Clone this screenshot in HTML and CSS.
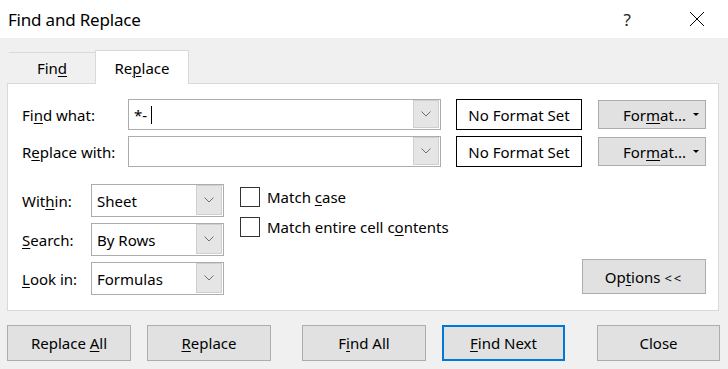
FILE: index.html
```html
<!DOCTYPE html>
<html lang="en">
<head>
    <meta charset="UTF-8">
    <title>Find and Replace</title>
    <link rel="stylesheet" href="styles.css">
</head>
<body>
    <div class="titlebar">
        <span class="title">Find and Replace</span>
        <span class="help">?</span>
        <span class="close-x">
            <svg width="16" height="16" viewBox="0 0 16 16"><path d="M1 1 L15 15 M15 1 L1 15" stroke="#000" stroke-width="1" fill="none"/></svg>
        </span>
    </div>

    <div class="dialog">
        <div class="tabs">
            <div class="tab">Fin<u>d</u></div>
            <div class="tab active">Re<u>p</u>lace</div>
        </div>

        <div class="panel">
            <div class="field-row">
                <label class="field-label">Fi<u>n</u>d what:</label>
                <div class="combo wide">
                    <span class="combo-text">*-<span class="caret"></span></span>
                    <span class="drop"><svg width="10" height="6" viewBox="0 0 10 6"><path d="M0.5 0.5 L5 5 L9.5 0.5" stroke="#707070" fill="none"/></svg></span>
                </div>
                <div class="format-preview">No Format Set</div>
                <button class="btn format-btn"><span>For<u>m</u>at...</span><span class="tri"></span></button>
            </div>
            <div class="field-row second">
                <label class="field-label">R<u>e</u>place with:</label>
                <div class="combo wide">
                    <span class="combo-text"></span>
                    <span class="drop"><svg width="10" height="6" viewBox="0 0 10 6"><path d="M0.5 0.5 L5 5 L9.5 0.5" stroke="#707070" fill="none"/></svg></span>
                </div>
                <div class="format-preview">No Format Set</div>
                <button class="btn format-btn"><span>For<u>m</u>at...</span><span class="tri"></span></button>
            </div>

            <div class="lower">
                <div class="selects">
                    <div class="select-row">
                        <label class="select-label">Wit<u>h</u>in:</label>
                        <div class="combo small">
                            <span class="combo-text">Sheet</span>
                            <span class="drop"><svg width="10" height="6" viewBox="0 0 10 6"><path d="M0.5 0.5 L5 5 L9.5 0.5" stroke="#707070" fill="none"/></svg></span>
                        </div>
                    </div>
                    <div class="select-row">
                        <label class="select-label"><u>S</u>earch:</label>
                        <div class="combo small">
                            <span class="combo-text">By Rows</span>
                            <span class="drop"><svg width="10" height="6" viewBox="0 0 10 6"><path d="M0.5 0.5 L5 5 L9.5 0.5" stroke="#707070" fill="none"/></svg></span>
                        </div>
                    </div>
                    <div class="select-row">
                        <label class="select-label"><u>L</u>ook in:</label>
                        <div class="combo small">
                            <span class="combo-text">Formulas</span>
                            <span class="drop"><svg width="10" height="6" viewBox="0 0 10 6"><path d="M0.5 0.5 L5 5 L9.5 0.5" stroke="#707070" fill="none"/></svg></span>
                        </div>
                    </div>
                </div>

                <div class="checks">
                    <label class="check-row"><span class="box"></span><span>Match <u>c</u>ase</span></label>
                    <label class="check-row"><span class="box"></span><span>Match entire cell c<u>o</u>ntents</span></label>
                </div>

                <button class="btn options-btn">Op<u>t</u>ions <span class="chev">&lt;&lt;</span></button>
            </div>
        </div>

        <div class="actions">
            <button class="btn action">Replace <u>A</u>ll</button>
            <button class="btn action gap-s"><u>R</u>eplace</button>
            <button class="btn action gap-l">F<u>i</u>nd All</button>
            <button class="btn action narrow gap-s default"><u>F</u>ind Next</button>
            <button class="btn action narrow gap-l">Close</button>
        </div>
    </div>
</body>
</html>
```

FILE: styles.css
```css
* {
    box-sizing: border-box;
}

body {
    margin: 0;
    width: 728px;
    height: 369px;
    overflow: hidden;
    background: #f0f0f0;
    font-family: 'Noto Sans', sans-serif;
    font-size: 15px;
    color: #000;
}

u {
    text-decoration-thickness: 1px;
    text-underline-offset: 2px;
}

.titlebar {
    height: 38px;
    background: #fff;
    display: flex;
    align-items: center;
    padding-left: 8px;
}

.title {
    flex: 1;
    font-size: 17px;
    letter-spacing: -0.2px;
}

.help {
    font-size: 17px;
    margin-right: 58px;
    color: #222;
}

.close-x {
    display: flex;
    margin-right: 23px;
}

.dialog {
    padding: 12px 0 0 7px;
}

.tabs {
    display: flex;
    align-items: flex-end;
    height: 33px;
    padding-left: 2px;
}

.tab {
    width: 86px;
    height: 31px;
    border-top: 1px solid #d9d9d9;
    display: flex;
    align-items: center;
    justify-content: center;
}

.tab.active {
    width: 94px;
    height: 34px;
    margin-bottom: -1px;
    background: #fff;
    border: 1px solid #d9d9d9;
    border-bottom: none;
    position: relative;
    z-index: 1;
}

.panel {
    width: 712px;
    height: 228px;
    background: #fff;
    border: 1px solid #d9d9d9;
    padding: 15px 12px 0 14px;
}

.field-row {
    display: flex;
    align-items: center;
    height: 31px;
}

.field-row.second {
    margin-top: 6px;
}

.field-label {
    width: 106px;
}

.combo {
    display: flex;
    align-items: stretch;
    border: 1px solid #acacac;
    background: #fff;
}

.combo.wide {
    width: 313px;
    height: 31px;
}

.combo-text {
    flex: 1;
    display: flex;
    align-items: center;
    padding-left: 5px;
}

.caret {
    display: inline-block;
    width: 1px;
    height: 18px;
    background: #000;
    margin-left: 4px;
}

.drop {
    width: 26px;
    margin: 0 1px 1px 0;
    background: #e5e5e5;
    border: 1px solid #cfcfcf;
    display: flex;
    align-items: center;
    justify-content: center;
}

.format-preview {
    width: 126px;
    height: 31px;
    margin-left: 15px;
    border: 1px solid #000;
    display: flex;
    align-items: center;
    justify-content: center;
}

.btn {
    font-family: inherit;
    font-size: 15px;
    color: #000;
    background: #e1e1e1;
    border: 1px solid #adadad;
    padding: 0;
}

.format-btn {
    width: 108px;
    height: 29px;
    margin-left: 16px;
    display: flex;
    align-items: center;
    justify-content: space-between;
    padding: 0 6px 0 24px;
}

.tri {
    width: 0;
    height: 0;
    border-left: 3px solid transparent;
    border-right: 3px solid transparent;
    border-top: 3px solid #000;
}

.lower {
    display: flex;
    margin-top: 17px;
}

.selects {
    display: flex;
    flex-direction: column;
    gap: 6px;
}

.select-row {
    display: flex;
    align-items: center;
}

.select-label {
    width: 69px;
}

.combo.small {
    width: 133px;
    height: 33px;
}

.checks {
    margin-left: 16px;
    padding-top: 3px;
    display: flex;
    flex-direction: column;
    gap: 10px;
}

.check-row {
    display: flex;
    align-items: center;
    height: 20px;
}

.box {
    width: 20px;
    height: 20px;
    border: 1px solid #333;
    background: #fff;
    margin-right: 7px;
}

.options-btn {
    margin-left: auto;
    align-self: flex-end;
    width: 124px;
    height: 35px;
    margin-bottom: 1px;
}

.chev {
    font-size: 13px;
    letter-spacing: 2px;
}

.actions {
    display: flex;
    margin-top: 14px;
}

.action {
    width: 124px;
    height: 36px;
}

.action.narrow {
    width: 123px;
}

.gap-s {
    margin-left: 16px;
}

.gap-l {
    margin-left: 31px;
}

.action.narrow.gap-l {
    margin-left: 32px;
}

.default {
    border: 2px solid #0078d7;
}
```
